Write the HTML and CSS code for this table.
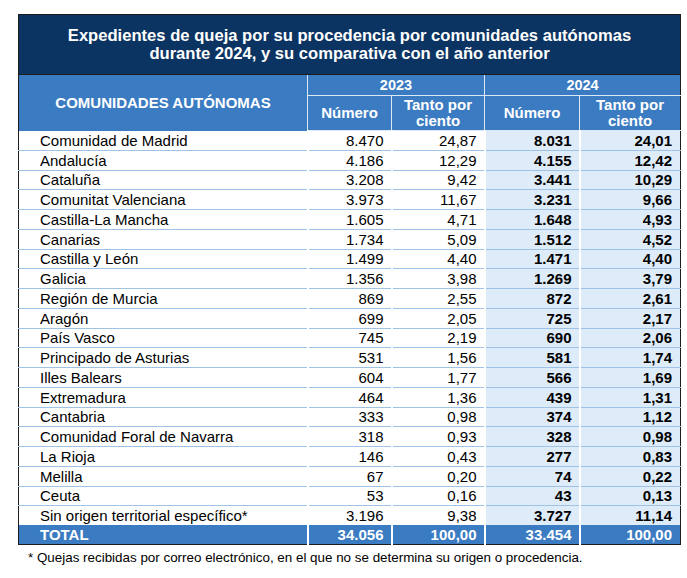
FILE: index.html
```html
<!DOCTYPE html>
<html lang="es">
<head>
<meta charset="utf-8">
<title>Expedientes de queja por comunidades autónomas</title>
<link rel="stylesheet" href="styles.css">
</head>
<body>
<div class="page">
  <table class="data">
    <colgroup>
      <col class="c-name"><col class="c-n23"><col class="c-p23"><col class="c-n24"><col class="c-p24">
    </colgroup>
    <thead>
      <tr><th colspan="5" class="title">Expedientes de queja por su procedencia por comunidades autónomas<br>durante 2024, y su comparativa con el año anterior</th></tr>
      <tr class="h1">
        <th rowspan="2" class="hname">COMUNIDADES AUTÓNOMAS</th>
        <th colspan="2">2023</th>
        <th colspan="2" class="last">2024</th>
      </tr>
      <tr class="h2">
        <th>Número</th>
        <th>Tanto por<br>ciento</th>
        <th>Número</th>
        <th class="last">Tanto por<br>ciento</th>
      </tr>
    </thead>
    <tbody>
      <tr><td class="name">Comunidad de Madrid</td><td>8.470</td><td>24,87</td><td class="y24">8.031</td><td class="y24 last">24,01</td></tr>
      <tr><td class="name">Andalucía</td><td>4.186</td><td>12,29</td><td class="y24">4.155</td><td class="y24 last">12,42</td></tr>
      <tr><td class="name">Cataluña</td><td>3.208</td><td>9,42</td><td class="y24">3.441</td><td class="y24 last">10,29</td></tr>
      <tr><td class="name">Comunitat Valenciana</td><td>3.973</td><td>11,67</td><td class="y24">3.231</td><td class="y24 last">9,66</td></tr>
      <tr><td class="name">Castilla-La Mancha</td><td>1.605</td><td>4,71</td><td class="y24">1.648</td><td class="y24 last">4,93</td></tr>
      <tr><td class="name">Canarias</td><td>1.734</td><td>5,09</td><td class="y24">1.512</td><td class="y24 last">4,52</td></tr>
      <tr><td class="name">Castilla y León</td><td>1.499</td><td>4,40</td><td class="y24">1.471</td><td class="y24 last">4,40</td></tr>
      <tr><td class="name">Galicia</td><td>1.356</td><td>3,98</td><td class="y24">1.269</td><td class="y24 last">3,79</td></tr>
      <tr><td class="name">Región de Murcia</td><td>869</td><td>2,55</td><td class="y24">872</td><td class="y24 last">2,61</td></tr>
      <tr><td class="name">Aragón</td><td>699</td><td>2,05</td><td class="y24">725</td><td class="y24 last">2,17</td></tr>
      <tr><td class="name">País Vasco</td><td>745</td><td>2,19</td><td class="y24">690</td><td class="y24 last">2,06</td></tr>
      <tr><td class="name">Principado de Asturias</td><td>531</td><td>1,56</td><td class="y24">581</td><td class="y24 last">1,74</td></tr>
      <tr><td class="name">Illes Balears</td><td>604</td><td>1,77</td><td class="y24">566</td><td class="y24 last">1,69</td></tr>
      <tr><td class="name">Extremadura</td><td>464</td><td>1,36</td><td class="y24">439</td><td class="y24 last">1,31</td></tr>
      <tr><td class="name">Cantabria</td><td>333</td><td>0,98</td><td class="y24">374</td><td class="y24 last">1,12</td></tr>
      <tr><td class="name">Comunidad Foral de Navarra</td><td>318</td><td>0,93</td><td class="y24">328</td><td class="y24 last">0,98</td></tr>
      <tr><td class="name">La Rioja</td><td>146</td><td>0,43</td><td class="y24">277</td><td class="y24 last">0,83</td></tr>
      <tr><td class="name">Melilla</td><td>67</td><td>0,20</td><td class="y24">74</td><td class="y24 last">0,22</td></tr>
      <tr><td class="name">Ceuta</td><td>53</td><td>0,16</td><td class="y24">43</td><td class="y24 last">0,13</td></tr>
      <tr><td class="name">Sin origen territorial específico*</td><td>3.196</td><td>9,38</td><td class="y24">3.727</td><td class="y24 last">11,14</td></tr>
    </tbody>
    <tfoot>
      <tr class="total"><td class="name">TOTAL</td><td>34.056</td><td>100,00</td><td>33.454</td><td class="last">100,00</td></tr>
    </tfoot>
  </table>
  <p class="note">* Quejas recibidas por correo electrónico, en el que no se determina su origen o procedencia.</p>
</div>
</body>
</html>
```

FILE: styles.css
```css
html, body {
  margin: 0;
  padding: 0;
  background: #fff;
}
.page {
  padding: 14px 0 0 18px;
  font-family: "Liberation Sans", Arial, sans-serif;
  color: #000;
}
.data {
  border-collapse: collapse;
  width: 662px;
  table-layout: fixed;
  border: 1px solid #1c1c1c;
}
.c-name { width: 289px; }
.c-n23 { width: 84px; }
.c-p23 { width: 93px; }
.c-n24 { width: 95px; }
.c-p24 { width: 101px; }

.title {
  background: #0c3462;
  color: #fff;
  font-size: 16.6px;
  font-weight: bold;
  line-height: 18px;
  height: 59px;
  padding: 0;
  text-align: center;
  border-bottom: 1px solid #1c1c1c;
}
.h1 th, .h2 th {
  background: #3b7bc1;
  color: #fff;
  font-weight: bold;
  font-size: 14.5px;
  text-align: center;
  padding: 0;
  border-right: 1px solid #dbe8f5;
  border-bottom: 1px solid #dbe8f5;
}
.h1 th { height: 20px; line-height: 18px; }
.h2 th { height: 34px; line-height: 16px; font-size: 15px; }
.h1 .hname { font-size: 15px; border-bottom: 0; }
.h1 th.last, .h2 th.last { border-right: 0; }

tbody td {
  height: 18.75px;
  padding: 0 7px 0 0;
  font-size: 15px;
  line-height: 17px;
  text-align: right;
  border-right: 2px solid #fff;
  border-bottom: 1px solid #9fc3e7;
  white-space: nowrap;
}
tbody td.name {
  text-align: left;
  padding: 0 0 0 21px;
}
tbody td.y24 {
  background: #deebf8;
  font-weight: bold;
}
tbody td.last { border-right: 0; padding-right: 8px; }
tbody tr:last-child td { border-bottom: 0; }

.total td {
  background: #3b7bc1;
  color: #fff;
  font-weight: bold;
  font-size: 15px;
  line-height: 17px;
  height: 19px;
  padding: 0 7px 0 0;
  text-align: right;
  border-right: 2px solid #fff;
}
.total td.name { text-align: left; padding-left: 21px; }
.total td.last { border-right: 0; padding-right: 8px; }

.note {
  margin: 5px 0 0 10px;
  font-size: 13.4px;
  line-height: 15px;
}
```
